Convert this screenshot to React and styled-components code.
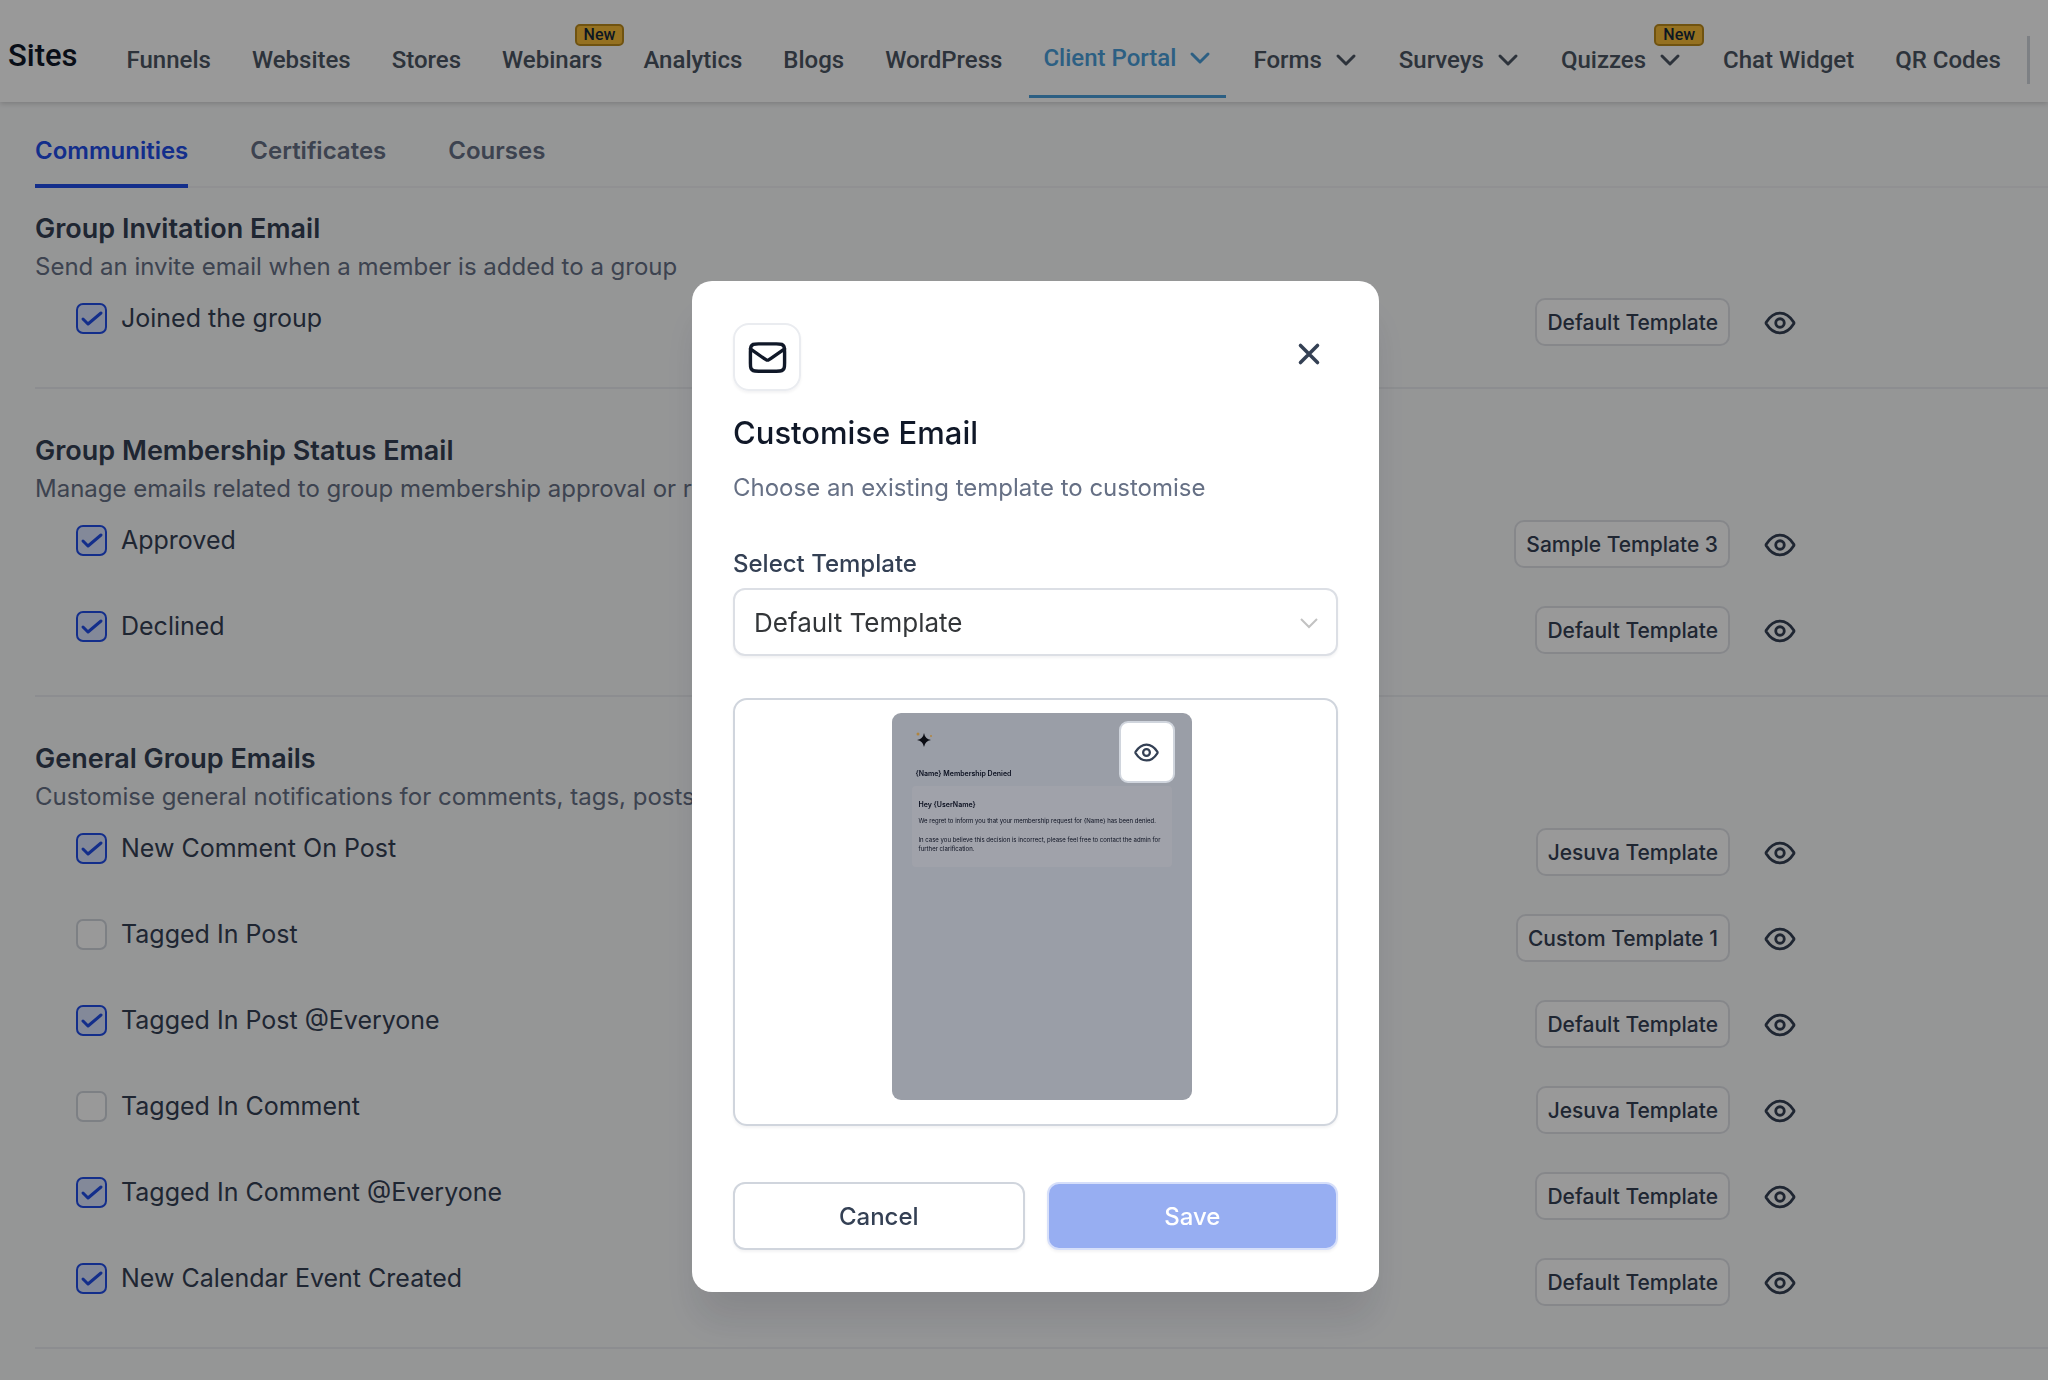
import { useState } from 'react'
import styled, { createGlobalStyle } from 'styled-components'

const GlobalStyle = createGlobalStyle`
  *, *::before, *::after { box-sizing: border-box; }

  body {
    margin: 0;
    min-height: 100vh;
    overflow-x: hidden;
    background: #f9fafb;
    color: #344054;
    font-family: Inter, "Liberation Sans", sans-serif;
  }

  button, select, input { font-family: inherit; }
  h1, h2, h3, p, ul { margin: 0; padding: 0; }
`

const Header = styled.header`
  position: relative;
  display: flex;
  align-items: stretch;
  height: 102px;
  padding-left: 8px;
  background: #fff;
  box-shadow: 0 2px 5px rgba(0, 0, 0, .16);
  font-family: Roboto, "Liberation Sans", sans-serif;
`

const SiteTitle = styled.h1`
  padding-top: 36px;
  font-size: 31px;
  line-height: 40px;
  font-weight: 500;
  color: #101828;
`

const Nav = styled.nav`
  display: flex;
  flex: 1;
  gap: 13px;
  padding: 0 12px 4px 35px;
`

const NavLink = styled.a`
  position: relative;
  display: flex;
  align-items: flex-start;
  gap: 13px;
  padding: ${({ $active }) => ($active ? '42px 14px 0' : '44px 14px 0')};
  border-bottom: 3px solid ${({ $active }) => ($active ? '#4a9eda' : 'transparent')};
  color: ${({ $active }) => ($active ? '#4a9eda' : '#4b5563')};
  font-size: 24px;
  line-height: 32px;
  font-weight: 500;
  white-space: nowrap;
  text-decoration: none;

  svg { margin-top: 4px; }
`

const NewBadge = styled.span`
  position: absolute;
  top: 24px;
  right: -8px;
  padding: 0 7px;
  border: 2px solid #bb8a1c;
  border-radius: 5px;
  background: #f9bd38;
  color: #14283a;
  font-size: 16px;
  line-height: 18px;
`

const NavDivider = styled.span`
  width: 3px;
  height: 48px;
  margin: 36px 18px 0 0;
  background: #d0d5dd;
`

const Tabs = styled.div`
  display: flex;
  gap: 62px;
  height: 86px;
  margin-left: 35px;
  border-bottom: 2px solid #f0f1f4;
`

const Tab = styled.button`
  height: 86px;
  padding: 16px 0 0;
  border: 0;
  border-bottom: 4px solid ${({ $active }) => ($active ? '#204de8' : 'transparent')};
  background: transparent;
  color: ${({ $active }) => ($active ? '#204de8' : '#667085')};
  font-size: 24px;
  line-height: 36px;
  font-weight: 600;
  cursor: pointer;
`

const Section = styled.section`
  margin-left: 35px;
  padding: 44px 0 41px;
  border-bottom: 2px solid #eaecf0;

  &:first-of-type { padding-top: 23px; }
`

const SectionTitle = styled.h2`
  margin-bottom: 2px;
  font-size: 27px;
  line-height: 36px;
  font-weight: 600;
  color: #344054;
`

const SectionText = styled.p`
  font-size: 24px;
  line-height: 36px;
  color: #667085;
`

const Rows = styled.ul`
  display: grid;
  gap: 38px;
  padding: 13px 251px 0 41px;
  list-style: none;
`

const Row = styled.li`
  display: flex;
  align-items: center;
  height: 48px;
`

const CheckLabel = styled.label`
  display: flex;
  align-items: center;
  align-self: flex-start;
  gap: 14px;
  height: 40px;
  margin-right: auto;
  font-size: 25px;
  color: #344054;
  cursor: pointer;
`

const CheckWrap = styled.span`
  position: relative;
  display: inline-flex;

  svg {
    position: absolute;
    inset: 0;
    pointer-events: none;
  }
`

const CheckInput = styled.input`
  appearance: none;
  width: 31px;
  height: 31px;
  margin: 0;
  border: 2px solid #d0d5dd;
  border-radius: 7px;
  background: #fff;
  cursor: pointer;

  &:checked {
    border-color: #204de8;
    background: #dbe4ff;
  }
`

const TemplateButton = styled.button`
  height: 48px;
  padding: 0 10px;
  border: 2px solid #dfe2e7;
  border-radius: 10px;
  background: #fff;
  color: #344054;
  font-size: 21px;
  font-weight: 500;
  cursor: pointer;
`

const EyeButton = styled.button`
  display: inline-flex;
  align-items: center;
  height: 48px;
  margin-left: 33px;
  padding: 2px 0 0;
  border: 0;
  background: transparent;
  color: #344054;
  cursor: pointer;
`

const Overlay = styled.div`
  position: fixed;
  inset: 0;
  display: flex;
  align-items: flex-start;
  justify-content: center;
  padding: 281px 0 0 23px;
  background: rgba(0, 0, 0, .4);
`

const Dialog = styled.div`
  width: 100%;
  max-width: 687px;
  padding: 42px 41px;
  border-radius: 20px;
  background: #fff;
  box-shadow: 0 32px 38px -6px rgba(16, 24, 40, .12);
`

const DialogHead = styled.div`
  display: flex;
  align-items: flex-start;
  justify-content: space-between;
`

const IconBox = styled.div`
  display: grid;
  place-items: center;
  width: 68px;
  height: 68px;
  border: 2px solid #eaecf0;
  border-radius: 16px;
  box-shadow: 0 2px 3px rgba(16, 24, 40, .05);
  color: #101828;
`

const CloseButton = styled.button`
  display: grid;
  place-items: center;
  width: 58px;
  height: 62px;
  padding: 0;
  border: 0;
  background: transparent;
  color: #344054;
  cursor: pointer;
`

const DialogTitle = styled.h2`
  margin-top: 22px;
  font-size: 31px;
  line-height: 40px;
  font-weight: 500;
  color: #101828;
`

const DialogText = styled.p`
  margin-top: 17px;
  font-size: 24px;
  line-height: 36px;
  color: #667085;
`

const FieldLabel = styled.label`
  display: block;
  margin: 40px 0 6px;
  font-size: 24px;
  line-height: 36px;
  font-weight: 500;
  color: #344054;
`

const SelectWrap = styled.div`
  position: relative;

  svg {
    position: absolute;
    top: 24px;
    right: 18px;
    pointer-events: none;
  }
`

const Select = styled.select`
  appearance: none;
  display: block;
  width: 100%;
  height: 68px;
  padding: 0 56px 0 19px;
  border: 2px solid #dcdfe5;
  border-radius: 12px;
  background: #fff;
  box-shadow: 0 2px 3px rgba(16, 24, 40, .05);
  color: #333639;
  font-size: 26px;
`

const Preview = styled.div`
  display: flex;
  justify-content: center;
  height: 428px;
  margin-top: 42px;
  padding: 13px 0 24px 12px;
  border: 2px solid #d0d5dd;
  border-radius: 14px;
  box-shadow: 0 2px 3px rgba(16, 24, 40, .05);
`

const Thumb = styled.div`
  position: relative;
  width: 300px;
  padding: 16px 20px 0;
  border-radius: 9px;
  background: #9a9ea7;
  color: #0b1020;
`

const ThumbEye = styled.button`
  position: absolute;
  top: 8px;
  right: 17px;
  display: grid;
  place-items: center;
  width: 56px;
  height: 62px;
  padding: 0;
  border: 2px solid #d0d5dd;
  border-radius: 9px;
  background: #fff;
  color: #344054;
  cursor: pointer;
`

const MailLogo = styled.div`
  height: 20px;
  padding-left: 3px;
`

const MailTitle = styled.h3`
  margin-top: 19px;
  padding-left: 4px;
  font-size: 7px;
  line-height: 12px;
  font-weight: 600;
`

const MailCard = styled.div`
  height: 81px;
  margin-top: 6px;
  padding: 14px 7px 0;
  border-radius: 4px;
  background: #a0a2aa;
  font-size: 6px;
  line-height: 9px;

  p + p { margin-top: 10px; }

  h4 + p { margin-top: 7px; }
`

const MailHello = styled.h4`
  margin: 0;
  font-size: 7px;
  font-weight: 600;
`

const Actions = styled.div`
  display: grid;
  grid-template-columns: 1fr 1fr;
  gap: 22px;
  margin-top: 56px;
`

const ActionButton = styled.button`
  height: 68px;
  border: 2px solid ${({ $primary }) => ($primary ? '#d6dffa' : '#d0d5dd')};
  border-radius: 12px;
  background: ${({ $primary }) => ($primary ? '#97aef2' : '#fff')};
  box-shadow: 0 2px 3px rgba(16, 24, 40, .05);
  color: ${({ $primary }) => ($primary ? '#fff' : '#344054')};
  font-size: 24px;
  font-weight: 500;
  cursor: pointer;
`

const Chevron = () => (
  <svg width="23" height="24" viewBox="0 0 23 24" fill="none" stroke="currentColor" strokeWidth="3" strokeLinecap="round" strokeLinejoin="round" aria-hidden="true">
    <path d="M3 8l8 8 8-8" />
  </svg>
)

const Eye = ({ size = 34 }) => (
  <svg width={size} height={size} viewBox="0 0 24 24" fill="none" stroke="currentColor" strokeWidth="2" strokeLinecap="round" strokeLinejoin="round" aria-hidden="true">
    <path d="M2.42 12.713c-.136-.215-.204-.323-.242-.49a1.173 1.173 0 0 1 0-.446c.038-.167.106-.274.242-.49C3.546 9.505 6.895 5 12 5s8.455 4.505 9.58 6.287c.137.215.205.323.243.49.029.125.029.322 0 .446-.038.167-.106.274-.242.49C20.455 14.495 17.105 19 12 19c-5.106 0-8.455-4.505-9.58-6.287Z" />
    <circle cx="12" cy="12" r="3" />
  </svg>
)

const NAV = [
  { label: 'Funnels' },
  { label: 'Websites' },
  { label: 'Stores' },
  { label: 'Webinars', isNew: true },
  { label: 'Analytics' },
  { label: 'Blogs' },
  { label: 'WordPress' },
  { label: 'Client Portal', menu: true, active: true },
  { label: 'Forms', menu: true },
  { label: 'Surveys', menu: true },
  { label: 'Quizzes', menu: true, isNew: true },
  { label: 'Chat Widget' },
  { label: 'QR Codes' },
]

const TABS = ['Communities', 'Certificates', 'Courses']

const SECTIONS = [
  {
    title: 'Group Invitation Email',
    text: 'Send an invite email when a member is added to a group',
    rows: [{ label: 'Joined the group', template: 'Default Template', on: true }],
  },
  {
    title: 'Group Membership Status Email',
    text: 'Manage emails related to group membership approval or rejection',
    rows: [
      { label: 'Approved', template: 'Sample Template 3', on: true },
      { label: 'Declined', template: 'Default Template', on: true },
    ],
  },
  {
    title: 'General Group Emails',
    text: 'Customise general notifications for comments, tags, posts',
    rows: [
      { label: 'New Comment On Post', template: 'Jesuva Template', on: true },
      { label: 'Tagged In Post', template: 'Custom Template 1', on: false },
      { label: 'Tagged In Post @Everyone', template: 'Default Template', on: true },
      { label: 'Tagged In Comment', template: 'Jesuva Template', on: false },
      { label: 'Tagged In Comment @Everyone', template: 'Default Template', on: true },
      { label: 'New Calendar Event Created', template: 'Default Template', on: true },
    ],
  },
]

const EmailRow = ({ label, template, on }) => {
  const [checked, setChecked] = useState(on)

  return (
    <Row>
      <CheckLabel>
        <CheckWrap>
          <CheckInput type="checkbox" checked={checked} onChange={(e) => setChecked(e.target.checked)} />
          {checked && (
            <svg width="31" height="31" viewBox="0 0 31 31" fill="none" stroke="#204de8" strokeWidth="3" strokeLinecap="round" strokeLinejoin="round" aria-hidden="true">
              <path d="M7 16l5 5L25 10" />
            </svg>
          )}
        </CheckWrap>
        {label}
      </CheckLabel>
      <TemplateButton type="button">{template}</TemplateButton>
      <EyeButton type="button" aria-label={`Preview ${label}`}><Eye /></EyeButton>
    </Row>
  )
}

const CustomiseDialog = () => {
  const [template, setTemplate] = useState('Default Template')

  return (
    <Overlay>
      <Dialog role="dialog" aria-modal="true" aria-labelledby="dialog-title">
        <DialogHead>
          <IconBox>
            <svg width="41" height="41" viewBox="0 0 24 24" fill="none" stroke="currentColor" strokeWidth="2" strokeLinecap="round" strokeLinejoin="round" aria-hidden="true">
              <path d="M2 7l8.165 5.715c.661.463.992.695 1.351.784a2 2 0 0 0 .968 0c.36-.09.69-.32 1.351-.784L22 7M6.8 20h10.4c1.68 0 2.52 0 3.162-.327a3 3 0 0 0 1.311-1.311C22 17.72 22 16.88 22 15.2V8.8c0-1.68 0-2.52-.327-3.162a3 3 0 0 0-1.311-1.311C19.72 4 18.88 4 17.2 4H6.8c-1.68 0-2.52 0-3.162.327a3 3 0 0 0-1.311 1.311C2 6.28 2 7.12 2 8.8v6.4c0 1.68 0 2.52.327 3.162a3 3 0 0 0 1.311 1.311C4.28 20 5.12 20 6.8 20Z" />
            </svg>
          </IconBox>
          <CloseButton type="button" aria-label="Close">
            <svg width="34" height="34" viewBox="0 0 24 24" fill="none" stroke="currentColor" strokeWidth="2.5" strokeLinecap="round" aria-hidden="true">
              <path d="M18 6L6 18M6 6l12 12" />
            </svg>
          </CloseButton>
        </DialogHead>

        <DialogTitle id="dialog-title">Customise Email</DialogTitle>
        <DialogText>Choose an existing template to customise</DialogText>

        <FieldLabel htmlFor="template">Select Template</FieldLabel>
        <SelectWrap>
          <Select id="template" value={template} onChange={(e) => setTemplate(e.target.value)}>
            <option>Default Template</option>
            <option>Sample Template 3</option>
            <option>Jesuva Template</option>
            <option>Custom Template 1</option>
          </Select>
          <svg width="22" height="22" viewBox="0 0 22 22" fill="none" stroke="#c2c2c2" strokeWidth="2" aria-hidden="true">
            <path d="M3 7l8 8 8-8" />
          </svg>
        </SelectWrap>

        <Preview>
          <Thumb>
            <MailLogo>
              <svg width="20" height="20" viewBox="0 0 20 20" aria-hidden="true">
                <path d="M9 4q1 6 7 7-6 1-7 7-1-6-7-7 6-1 7-7Z" fill="#0b0d14" />
                <circle cx="3" cy="5" r="1.5" fill="#b08540" />
                <circle cx="16" cy="7" r="1" fill="#b08540" />
              </svg>
            </MailLogo>
            <MailTitle>{'{Name} Membership Denied'}</MailTitle>
            <MailCard>
              <MailHello>{'Hey {UserName}'}</MailHello>
              <p>{'We regret to inform you that your membership request for {Name} has been denied.'}</p>
              <p>In case you believe this decision is incorrect, please feel free to contact the admin for further clarification.</p>
            </MailCard>
            <ThumbEye type="button" aria-label="Preview template"><Eye size={27} /></ThumbEye>
          </Thumb>
        </Preview>

        <Actions>
          <ActionButton type="button">Cancel</ActionButton>
          <ActionButton type="button" $primary>Save</ActionButton>
        </Actions>
      </Dialog>
    </Overlay>
  )
}

const App = () => {
  const [tab, setTab] = useState('Communities')

  return (
    <>
      <GlobalStyle />
      <Header>
        <SiteTitle>Sites</SiteTitle>
        <Nav>
          {NAV.map(({ label, menu, active, isNew }) => (
            <NavLink key={label} href="#" $active={active}>
              {label}
              {menu && <Chevron />}
              {isNew && <NewBadge>New</NewBadge>}
            </NavLink>
          ))}
        </Nav>
        <NavDivider />
      </Header>

      <main>
        <Tabs role="tablist">
          {TABS.map(name => (
            <Tab key={name} type="button" role="tab" aria-selected={tab === name} $active={tab === name} onClick={() => setTab(name)}>
              {name}
            </Tab>
          ))}
        </Tabs>

        {SECTIONS.map(({ title, text, rows }) => (
          <Section key={title}>
            <SectionTitle>{title}</SectionTitle>
            <SectionText>{text}</SectionText>
            <Rows>
              {rows.map(row => <EmailRow key={row.label} {...row} />)}
            </Rows>
          </Section>
        ))}
      </main>

      <CustomiseDialog />
    </>
  )
}

export default App
